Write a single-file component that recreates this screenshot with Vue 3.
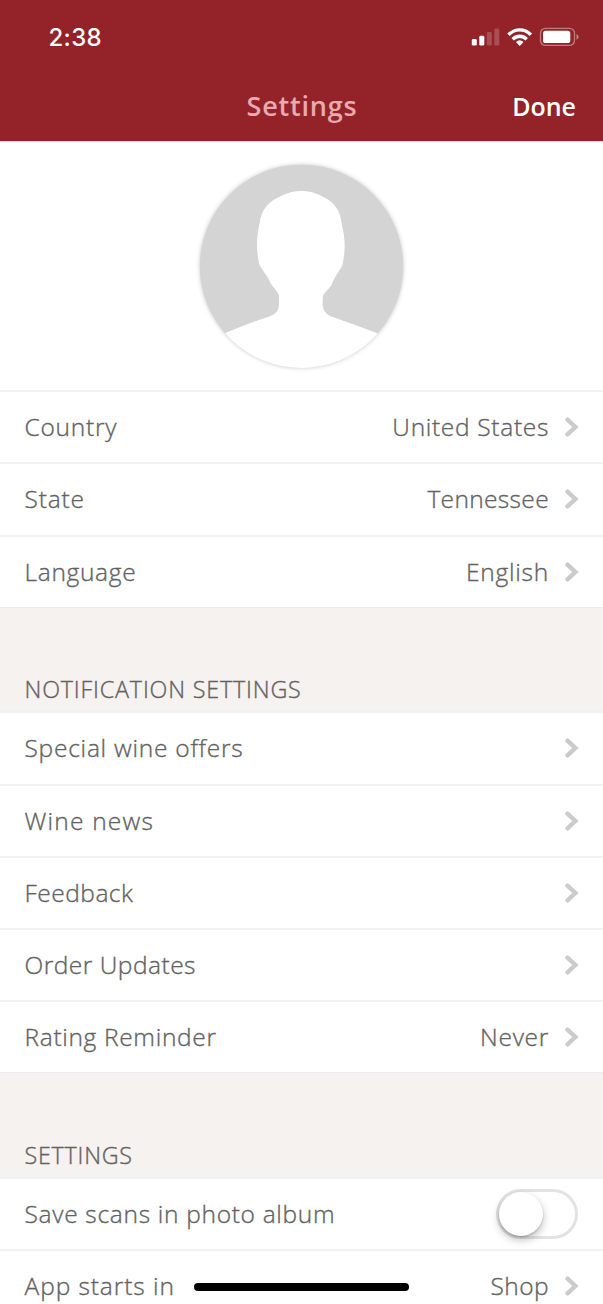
<script setup>
const groups = [
  {
    title: '',
    rows: [
      { label: 'Country', value: 'United States', ls: 0.75, vs: 0.68 },
      { label: 'State', value: 'Tennessee', ls: 0.8, vs: 0.35 },
      { label: 'Language', value: 'English', ls: 0.68, vs: 0.75 },
    ],
  },
  {
    title: 'NOTIFICATION SETTINGS',
    ts: 0.83,
    rows: [
      { label: 'Special wine offers', ls: 0.76 },
      { label: 'Wine news', ls: 1.2 },
      { label: 'Feedback', ls: 0.5 },
      { label: 'Order Updates', ls: 0.5 },
      { label: 'Rating Reminder', value: 'Never', ls: 0.67, vs: 0.7 },
    ],
  },
  {
    title: 'SETTINGS',
    ts: 0.75,
    rows: [
      { label: 'Save scans in photo album', toggle: true, ls: 0.69 },
      { label: 'App starts in', value: 'Shop', ls: 0.92, vs: 0.4 },
    ],
  },
]
const spacing = (v) => ({ letterSpacing: `${v || 0}px` })
</script>

<template>
  <div class="screen">
    <header class="top">
      <div class="status">
        <span class="time">2:38</span>
        <svg class="indicators" viewBox="0 0 110 22" width="110" height="22">
          <g fill="#fff">
            <rect x="1.8" y="13" width="5" height="6.6" rx="1.4" />
            <rect x="9.3" y="9.8" width="5" height="9.8" rx="1.4" />
            <rect x="16.8" y="6" width="5" height="13.6" rx="1.4" opacity=".2" />
            <rect x="24.3" y="2.5" width="5" height="17.1" rx="1.4" opacity=".2" />
          </g>
          <g transform="translate(-0.5 1)">
            <g fill="none" stroke="#fff" stroke-width="3.4">
              <path d="M39 7.7 C45.5 1.2 54.9 1.2 61.4 7.7" />
              <path d="M43.1 12.2 C47.3 8.2 53.1 8.2 57.3 12.2" />
            </g>
            <path d="M46.4 15 Q50.2 11.6 54 15 L50.2 18.9 Z" fill="#fff" />
          </g>
          <rect x="70.5" y="2.4" width="34" height="17" rx="4.8" fill="none" stroke="#fff" stroke-opacity=".4" stroke-width="1.3" />
          <rect x="73" y="4.8" width="27.3" height="12.3" rx="2.6" fill="#fff" />
          <path d="M106.5 8 Q108.6 9.2 108.6 10.9 Q108.6 12.6 106.5 13.8 Z" fill="#fff" opacity=".45" />
        </svg>
      </div>
      <div class="nav">
        <span></span>
        <h1>Settings</h1>
        <span class="done">Done</span>
      </div>
    </header>

    <section class="profile">
      <svg class="avatar" viewBox="0 0 675 720" width="225" height="240">
        <defs>
          <clipPath id="disc"><circle cx="334.5" cy="349" r="305" /></clipPath>
        </defs>
        <circle class="disc" cx="334.5" cy="349" r="305" fill="#d4d4d4" />
        <path
          clip-path="url(#disc)"
          fill="#fff"
          d="M334 123 C356 123 372 127 390 136 C432 154 452 181 455 222 C467 268 466 300 458 343 C448 365 434 380 425 404 C412 423 401 427 398 443 V461 C398 483 411 495 430 502 Q500 526 562 550 L675 720 H0 L106 549 Q173 520 236 500 C257 492 267 484 267 462 V437 C264 424 251 416 241 398 C235 380 220 365 208 344 C199 300 198 268 209 220 C213 181 234 154 278 136 C296 127 312 123 334 123 Z"
        />
      </svg>
    </section>

    <section v-for="(group, g) in groups" :key="g" class="group">
      <h2 v-if="group.title"><span :style="spacing(group.ts)">{{ group.title }}</span></h2>
      <div v-for="row in group.rows" :key="row.label" class="row">
        <span class="label" :style="spacing(row.ls)">{{ row.label }}</span>
        <span v-if="row.toggle" class="toggle"><span class="knob"></span></span>
        <template v-else>
          <span class="value" :style="spacing(row.vs)">{{ row.value }}</span>
          <svg class="chevron" viewBox="0 0 14 20" width="14" height="20">
            <path d="M2.5 2.7 L10.3 10 L2.5 17.3" />
          </svg>
        </template>
      </div>
    </section>
    <div class="home"></div>
  </div>
</template>

<style>
body {
  margin: 0;
}
</style>

<style scoped>
.screen {
  position: relative;
  width: 603px;
  height: 1304px;
  overflow: hidden;
  background: #fff;
  color: #626262;
  font-family: "Open Sans", "Noto Sans", sans-serif;
}
.top {
  height: 142px;
  box-sizing: border-box;
  background: #932329;
  color: #fff;
  border-bottom: 1px solid #f3d9dc;
}
.status {
  display: flex;
  justify-content: space-between;
  align-items: center;
  height: 74px;
  padding: 0 23px 0 48.5px;
}
.time {
  font-family: Inter, sans-serif;
  font-size: 24px;
  font-weight: 550;
  letter-spacing: 0.3px;
}
.nav {
  display: grid;
  grid-template-columns: 1fr auto 1fr;
  align-items: center;
  height: 64px;
  padding: 0 27px 0 28px;
}
h1 {
  margin: 0;
  font-size: 27px;
  font-weight: 600;
  letter-spacing: 0.8px;
  line-height: 34px;
  color: #e8a9b0;
}
.done {
  text-align: right;
  font-size: 25px;
  line-height: 34px;
  font-weight: 600;
}
.profile {
  height: 248.2px;
  padding-left: 190px;
  padding-top: 8px;
  box-sizing: border-box;
}
.avatar {
  display: block;
  overflow: visible;
}
.disc {
  filter: drop-shadow(0 0 7px rgba(0, 0, 0, 0.22));
}
.group h2 {
  display: flex;
  align-items: flex-end;
  height: 104.6px;
  box-sizing: border-box;
  margin: 0;
  padding: 0 24.5px 6.2px;
  border-top: 1px solid #ededed;
  background: #f6f2ef;
  font-size: 23.3px;
  line-height: 32px;
  font-weight: 300;
  -webkit-text-stroke: 0.35px #626262;
}
.row {
  display: flex;
  align-items: center;
  box-sizing: border-box;
  height: 72.2px;
  padding: 0 24px 0 24.5px;
  border-top: 2px solid #f2f1f1;
  font-size: 24.5px;
  font-weight: 300;
  -webkit-text-stroke: 0.35px #626262;
  white-space: nowrap;
}
.label,
.value {
  padding-bottom: 1px;
}
.label {
  flex: 1;
}
.chevron {
  margin-left: 16px;
  fill: none;
  stroke: #cbcbcb;
  stroke-width: 4.4;
  stroke-linecap: round;
  stroke-linejoin: miter;
}
.toggle {
  width: 82px;
  height: 50px;
  margin-right: 1px;
  box-sizing: border-box;
  border: 3px solid #e3e3e3;
  border-radius: 25px;
}
.knob {
  display: block;
  width: 44px;
  height: 44px;
  border-radius: 50%;
  background: #fff;
  box-shadow: 0 4px 8px rgba(0, 0, 0, 0.25), 0 1px 2px rgba(0, 0, 0, 0.2);
}
.home {
  position: absolute;
  left: 194px;
  top: 1283px;
  width: 215px;
  height: 8px;
  border-radius: 4px;
  background: #000;
}
</style>
